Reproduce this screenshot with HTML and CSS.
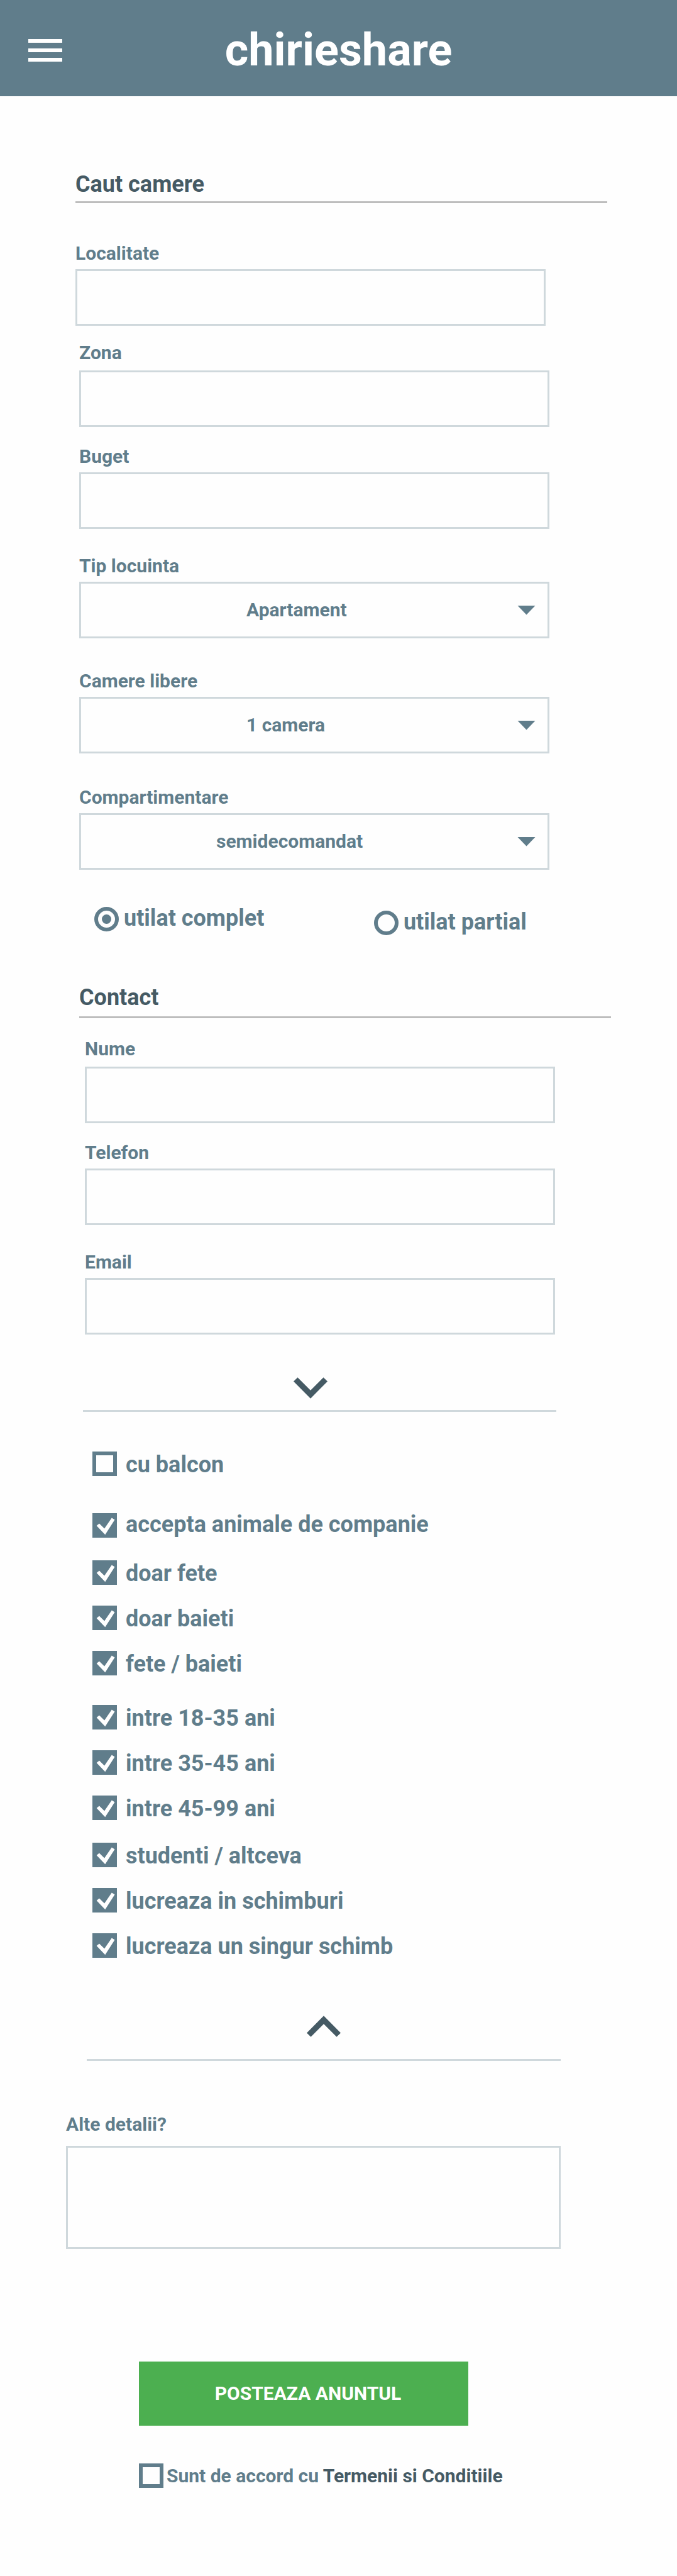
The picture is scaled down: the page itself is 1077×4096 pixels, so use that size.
FILE: index.html
```html
<!DOCTYPE html>
<html lang="ro">
<head>
  <meta charset="utf-8">
  <meta name="viewport" content="width=device-width, initial-scale=1">
  <title>chirieshare</title>
  <link rel="stylesheet" href="styles.css">
</head>
<body>
  <header class="topbar">
    <button class="menu-button" type="button" aria-label="Meniu">
      <span class="menu-bar"></span>
      <span class="menu-bar"></span>
      <span class="menu-bar"></span>
    </button>
    <h1 class="brand">chirieshare</h1>
  </header>

  <form class="ad-form">
    <section class="search">
      <h2 class="section-title">Caut camere</h2>
      <div class="fields">
        <div class="field field-first">
          <label class="label" for="localitate">Localitate</label>
          <input class="control" id="localitate" type="text">
        </div>
        <div class="field field-roomy space-s">
          <label class="label" for="zona">Zona</label>
          <input class="control" id="zona" type="text">
        </div>
        <div class="field space-m">
          <label class="label" for="buget">Buget</label>
          <input class="control" id="buget" type="text">
        </div>
        <div class="field space-l">
          <label class="label" for="tip">Tip locuinta</label>
          <div class="select">
            <select class="control" id="tip"><option>Apartament</option></select>
          </div>
        </div>
        <div class="field space-xl">
          <label class="label" for="camere">Camere libere</label>
          <div class="select">
            <select class="control" id="camere"><option>1 camera</option></select>
          </div>
        </div>
        <div class="field space-xxl">
          <label class="label" for="compartimentare">Compartimentare</label>
          <div class="select select-wide">
            <select class="control" id="compartimentare"><option>semidecomandat</option></select>
          </div>
        </div>
      </div>
      <div class="radios">
        <label class="radio"><input class="radio-dot" type="radio" name="utilat" checked>utilat complet</label>
        <label class="radio radio-low"><input class="radio-dot" type="radio" name="utilat">utilat partial</label>
      </div>
    </section>

    <section class="contact">
      <h2 class="section-title section-title-roomy">Contact</h2>
      <div class="contact-fields">
        <div class="field field-roomy">
          <label class="label" for="nume">Nume</label>
          <input class="control" id="nume" type="text">
        </div>
        <div class="field space-m">
          <label class="label" for="telefon">Telefon</label>
          <input class="control" id="telefon" type="tel">
        </div>
        <div class="field space-l">
          <label class="label" for="email">Email</label>
          <input class="control" id="email" type="email">
        </div>
      </div>
    </section>

    <div class="fold fold-open">
      <button class="fold-button" type="button" aria-label="Mai multe optiuni">
        <svg class="chevron" viewBox="0 0 216 134" aria-hidden="true"><path d="M0 25 26 0l82 82L190 0l26 25-108 109z"/></svg>
      </button>
    </div>

    <div class="options">
      <div class="option-group">
        <label class="option"><input class="tick" type="checkbox">cu balcon</label>
      </div>
      <div class="option-group">
        <label class="option option-low"><input class="tick" type="checkbox" checked>accepta animale de companie</label>
      </div>
      <div class="option-group">
        <label class="option"><input class="tick" type="checkbox" checked>doar fete</label>
        <label class="option"><input class="tick" type="checkbox" checked>doar baieti</label>
        <label class="option"><input class="tick" type="checkbox" checked>fete / baieti</label>
      </div>
      <div class="option-group">
        <label class="option"><input class="tick" type="checkbox" checked>intre 18-35 ani</label>
        <label class="option"><input class="tick" type="checkbox" checked>intre 35-45 ani</label>
        <label class="option"><input class="tick" type="checkbox" checked>intre 45-99 ani</label>
      </div>
      <div class="option-group">
        <label class="option"><input class="tick" type="checkbox" checked>studenti / altceva</label>
        <label class="option"><input class="tick" type="checkbox" checked>lucreaza in schimburi</label>
        <label class="option"><input class="tick" type="checkbox" checked>lucreaza un singur schimb</label>
      </div>
    </div>

    <div class="fold fold-close">
      <button class="fold-button" type="button" aria-label="Mai putine optiuni">
        <svg class="chevron" viewBox="0 0 216 134" aria-hidden="true"><path d="M0 109 26 134l82-82 82 82 26-25L108 0z"/></svg>
      </button>
    </div>

    <div class="field details">
      <label class="label" for="detalii">Alte detalii?</label>
      <textarea class="control control-area" id="detalii"></textarea>
    </div>

    <div class="submit">
      <button class="submit-button" type="submit">POSTEAZA ANUNTUL</button>
      <div class="terms">
        <input class="tick" id="acord" type="checkbox">
        <label for="acord">Sunt de accord cu <a class="terms-link" href="#termeni">Termenii si Conditiile</a></label>
      </div>
    </div>
  </form>
</body>
</html>
```
FILE: styles.css
```css
:root {
  --slate: #607d8b;
  --slate-dark: #455a64;
  --slate-pale: #cfd8dc;
  --rule: #bdbdbd;
  --green: #4caf50;
  --page: #fefefe;
}

* {
  box-sizing: border-box;
}

body {
  margin: 0;
  background: var(--page);
  color: var(--slate);
  font-family: Roboto, "Liberation Sans", sans-serif;
  font-size: 30px;
  font-weight: 700;
  line-height: 36px;
}

button,
input,
select,
textarea {
  margin: 0;
  padding: 0;
  border: 0;
  border-radius: 0;
  background: none;
  color: inherit;
  font: inherit;
}

/* Top bar */

.topbar {
  display: grid;
  grid-template-columns: 54px 1fr 54px;
  align-items: center;
  padding: 38px 45px 31px;
  background: var(--slate);
  color: #fff;
}

.menu-button {
  display: flex;
  flex-direction: column;
  gap: 9px;
}

.menu-bar {
  width: 54px;
  height: 6px;
  background: #fff;
}

.brand {
  margin: 0;
  font-size: 72px;
  line-height: 84px;
  text-align: center;
}

/* Sections */

.ad-form {
  padding: 119px 0 141px;
}

.search {
  padding-left: 120px;
}

.contact {
  padding: 78px 0 0 126px;
}

.section-title {
  margin: 0 111px 0 0;
  padding-bottom: 6px;
  border-bottom: 3px solid var(--rule);
  color: var(--slate-dark);
  font-size: 36px;
  line-height: 42px;
}

.section-title-roomy {
  margin-right: 105px;
  padding-bottom: 9px;
}

.fields {
  padding: 62px 203px 0 6px;
}

.contact-fields {
  padding: 31px 194px 0 9px;
}

/* Fields */

.field {
  display: flex;
  flex-direction: column;
  gap: 7px;
}

.field-first {
  margin: 0 6px 0 -6px;
}

.field-roomy {
  gap: 10px;
}

.space-s {
  margin-top: 25px;
}

.space-m {
  margin-top: 29px;
}

.space-l {
  margin-top: 41px;
}

.space-xl {
  margin-top: 50px;
}

.space-xxl {
  margin-top: 52px;
}

.control {
  width: 100%;
  height: 90px;
  padding: 0 24px;
  border: 3px solid var(--slate-pale);
}

.control-area {
  display: block;
  height: 164px;
  padding: 18px 24px;
  resize: none;
}

.select {
  display: grid;
  grid-template-columns: 1fr auto;
  align-items: center;
}

.select .control {
  grid-area: 1 / 1 / 2 / 3;
  padding: 0 60px 0 263px;
  appearance: none;
}

.select-wide .control {
  padding-left: 215px;
}

.select::after {
  content: "";
  grid-area: 1 / 2;
  width: 29px;
  height: 15px;
  margin-right: 22px;
  background: var(--slate);
  clip-path: polygon(0 0, 100% 0, 50% 100%);
  pointer-events: none;
}

/* Radios */

.radios {
  display: grid;
  grid-template-columns: 48% 1fr;
  padding: 56px 0 0 30px;
}

.radio {
  display: flex;
  align-items: flex-end;
  align-self: start;
  gap: 8px;
  font-size: 36px;
  line-height: 42px;
}

.radio-low {
  padding-top: 6px;
}

.radio-dot {
  display: grid;
  flex: none;
  place-items: center;
  width: 39px;
  height: 39px;
  border: 6px solid var(--slate);
  border-radius: 50%;
  appearance: none;
}

.radio-dot:checked::before {
  content: "";
  width: 15px;
  height: 15px;
  border-radius: 50%;
  background: var(--slate);
}

/* Fold handles */

.fold {
  display: flex;
  justify-content: center;
  border-bottom: 3px solid var(--slate-pale);
}

.fold-open {
  margin: 68px 192px 0 132px;
  padding: 0 29px 18px 0;
}

.fold-close {
  margin: 89px 185px 0 138px;
  padding-bottom: 35px;
}

.chevron {
  display: block;
  width: 54px;
  height: 34px;
  fill: var(--slate-dark);
}

/* Options */

.options {
  padding: 63px 24px 0 147px;
}

.option-group {
  display: flex;
  flex-direction: column;
  gap: 30px;
}

.option-group:nth-child(2) {
  margin-top: 53px;
}

.option-group:nth-child(3) {
  margin-top: 36px;
}

.option-group:nth-child(4) {
  margin-top: 44px;
}

.option-group:nth-child(5) {
  margin-top: 33px;
}

.option {
  display: flex;
  align-items: flex-start;
  gap: 14px;
  font-size: 36px;
  line-height: 42px;
}

.option-low {
  align-items: flex-end;
}

.tick {
  flex: none;
  width: 39px;
  height: 39px;
  border: 6px solid var(--slate);
  appearance: none;
}

.tick:checked {
  border: 0;
  background: var(--slate);
}

.tick:checked::before {
  content: "";
  display: block;
  height: 100%;
  background: #fff;
  clip-path: polygon(17% 51%, 28% 42%, 49% 63%, 79% 19%, 91% 27%, 52% 88%);
}

/* Details and submit */

.details {
  gap: 16px;
  margin: 83px 185px 0 105px;
}

.submit {
  padding: 179px 24px 0 221px;
}

.submit-button {
  display: block;
  width: calc(100% - 308px);
  height: 102px;
  padding-left: 14px;
  background: var(--green);
  color: #fff;
}

.terms {
  display: flex;
  align-items: center;
  gap: 5px;
  margin-top: 60px;
}

.terms-link {
  color: var(--slate-dark);
  text-decoration: none;
}
```
